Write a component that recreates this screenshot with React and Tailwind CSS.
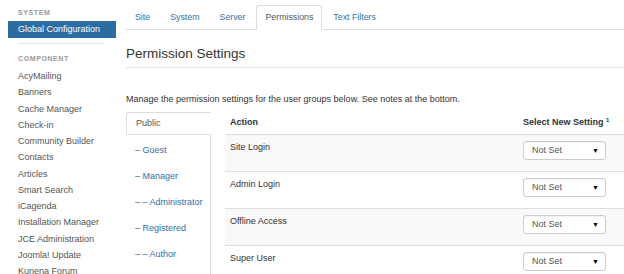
const components = [
    "AcyMailing",
    "Banners",
    "Cache Manager",
    "Check-in",
    "Community Builder",
    "Contacts",
    "Articles",
    "Smart Search",
    "iCagenda",
    "Installation Manager",
    "JCE Administration",
    "Joomla! Update",
    "Kunena Forum",
];

const tabs = ["Site", "System", "Server", "Permissions", "Text Filters"];
const groups = ["– Guest", "– Manager", "– – Administrator", "– Registered", "– – Author"];
const actions = ["Site Login", "Admin Login", "Offline Access", "Super User"];

const SelectBox = () => (
    <div className="w-[83px] h-[19px] border border-[#ccc] rounded-[3px] bg-white flex items-center justify-between pl-[8px] pr-[6px] shadow-[inset_0_1px_1px_rgba(0,0,0,0.05)]">
        <span className="text-[9px] text-[#555]">Not Set</span>
        <span className="text-[7px] text-black leading-none">▼</span>
    </div>
);

const App = () => {
    return (
        <div className="w-[624px] h-[274px] overflow-hidden bg-white flex font-['Liberation_Sans',Arial,sans-serif]">
            <aside className="w-[126px] shrink-0 pl-[8px] pr-[10px]">
                <div className="pl-[10px] pt-[9px] text-[7px] leading-[8px] font-bold tracking-[0.6px] text-[#999]">SYSTEM</div>
                <div className="mt-[4px] h-[17px] leading-[17px] bg-[#2d6ca2] text-white text-[9px] pl-[10px]">Global Configuration</div>
                <div className="mt-[5px] ml-[10px] w-[87px] h-px bg-[#e5e5e5]" />
                <div className="mt-[11px] pl-[10px] text-[7px] leading-[8px] font-bold tracking-[0.6px] text-[#999]">COMPONENT</div>
                <ul className="mt-[5px]">
                    {components.map((c) => (
                        <li key={c} className="pl-[10px] text-[9px] leading-[16.25px] text-[#555] whitespace-nowrap">{c}</li>
                    ))}
                </ul>
            </aside>

            <main className="flex-1 min-w-0">
                <div className="pt-[5px] flex border-b border-[#ddd]">
                    {tabs.map((t) =>
                        t === "Permissions" ? (
                            <div key={t} className="h-[25px] -mb-px mr-[2px] px-[8px] border border-[#ddd] border-b-white rounded-t-[3px] bg-white text-[8.8px] leading-[23px] text-[#555]">
                                {t}
                            </div>
                        ) : (
                            <div key={t} className="h-[24px] mr-[2px] px-[9px] text-[8.8px] leading-[24px] text-[#3071a9]">
                                {t}
                            </div>
                        )
                    )}
                </div>

                <h1 className="pt-[16px] pb-[5px] text-[13.5px] leading-[16px] text-[#333] border-b border-[#e5e5e5]">Permission Settings</h1>

                <p className="mt-[25px] text-[9px] leading-[12px] text-[#333] whitespace-nowrap">
                    Manage the permission settings for the user groups below. See notes at the bottom.
                </p>

                <div className="mt-[7px] flex">
                    <div className="w-[85px] shrink-0 flex flex-col h-[200px]">
                        <div className="h-[23px] border-t border-l border-b border-[#ddd] rounded-tl-[3px] pl-[9px] text-[9px] leading-[21px] text-[#555]">Public</div>
                        <ul className="flex-1 border-r border-[#ddd] pt-[2px]">
                            {groups.map((g) => (
                                <li key={g} className="pl-[9px] text-[9px] leading-[26px] text-[#3071a9] whitespace-nowrap">{g}</li>
                            ))}
                        </ul>
                    </div>

                    <div className="ml-[14px] flex-1 min-w-0">
                        <div className="flex h-[22px] items-center text-[9px] font-bold text-[#333]">
                            <div className="flex-1 px-[5px]">Action</div>
                            <div className="w-[106px] px-[5px] whitespace-nowrap">
                                Select New Setting <sup className="text-[6px]">1</sup>
                            </div>
                        </div>
                        {actions.map((a, i) => (
                            <div key={a} className={`flex h-[37px] border-t border-[#ddd] ${i % 2 === 0 ? "bg-[#f9f9f9]" : "bg-white"}`}>
                                <div className="flex-1 px-[5px] pt-[6px] text-[9px] leading-[12px] text-[#333]">{a}</div>
                                <div className="w-[106px] px-[5px] pt-[6px]">
                                    <SelectBox />
                                </div>
                            </div>
                        ))}
                    </div>
                </div>
            </main>
        </div>
    );
};

export default App;
